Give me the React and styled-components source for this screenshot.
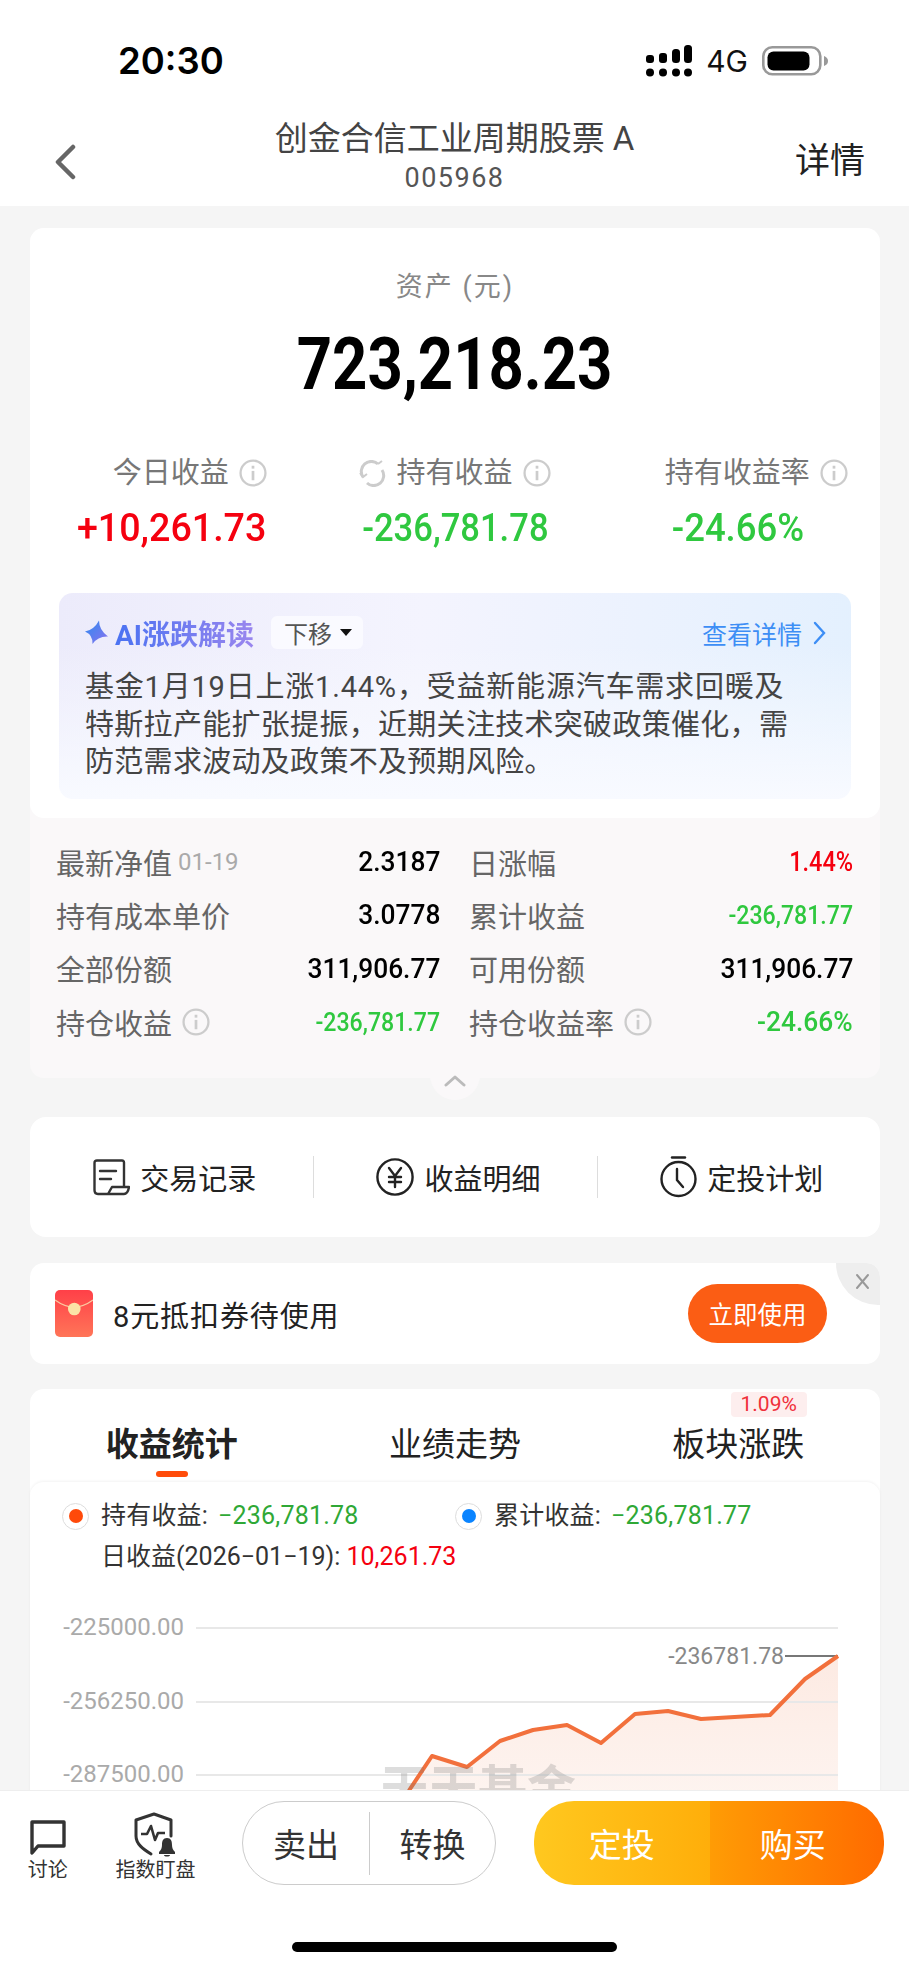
import React from 'react';
import styled, { createGlobalStyle } from 'styled-components';

const FONT = 'Roboto, "Noto Sans CJK SC", sans-serif';
const GREEN = '#2fc83f';
const RED = '#f5000f';

const GlobalStyle = createGlobalStyle`
  html, body { margin: 0; padding: 0; background: #fff; }
  body { font-family: ${FONT}; }
  * { box-sizing: border-box; }
`;

const Page = styled.div`
  width: 909px;
  height: 1969px;
  display: flex;
  flex-direction: column;
  overflow: hidden;
  background: #fff;
`;

/* the app's numerals are a DIN-like narrow face, so squeeze Roboto to fit */
const Num = styled.span`
  display: inline-block;
  white-space: nowrap;
  transform: scaleX(${(p) => p.$scale || 1});
  transform-origin: ${(p) => p.$origin || 'center'};
`;

/* status bar */
const StatusBar = styled.div`
  height: 90px;
  flex: none;
  display: flex;
  align-items: center;
  justify-content: space-between;
  padding: 32px 80px 0 118px;
`;
const Time = styled.div`
  font-family: Inter, sans-serif;
  font-weight: 600;
  font-size: 36.5px;
  line-height: 44px;
  color: #000;
`;
const StatusRight = styled.div`
  display: flex;
  align-items: center;
`;
const Network = styled.span`
  font-family: Inter, sans-serif;
  font-size: 30px;
  line-height: 32px;
  margin: 0 14px 0 14px;
  color: #111;
`;

/* nav */
const Nav = styled.div`
  height: 116px;
  flex: none;
  display: flex;
  align-items: center;
  justify-content: space-between;
  padding: 0 44px 0 54px;
  position: relative;
`;
const NavCenter = styled.div`
  position: absolute;
  left: 0;
  right: 0;
  top: 27px;
  text-align: center;
`;
const NavTitle = styled.div`
  font-size: 33px;
  line-height: 44px;
  color: #444;
`;
const NavCode = styled.div`
  font-size: 27px;
  line-height: 34px;
  color: #555;
  letter-spacing: 1.5px;
`;
const NavAction = styled.div`
  font-size: 35px;
  line-height: 44px;
  color: #222;
  margin-top: 28px;
`;
const BackIcon = styled.svg`
  margin-top: 28px;
`;

const Content = styled.div`
  flex: 1;
  min-height: 0;
  overflow: hidden;
  background: #f5f5f5;
  padding: 22px 29px 0 30px;
  border-bottom: 1px solid #eee;
`;

/* asset card */
const AssetCard = styled.div`
  position: relative;
  border-radius: 14px;
  background: #faf8f9;
`;
const AssetTop = styled.div`
  background: #fff;
  border-radius: 14px;
  padding: 42px 0 19px;
  text-align: center;
`;
const AssetLabel = styled.div`
  font-size: 27px;
  line-height: 34px;
  letter-spacing: 2px;
  color: #888;
`;
const AssetValue = styled.div`
  font-weight: 700;
  font-size: 72px;
  line-height: 80px;
  margin-top: 21px;
  color: #000;
`;
const Stats = styled.div`
  display: grid;
  grid-template-columns: repeat(3, 1fr);
  margin-top: 48px;
`;
const StatLabelRow = styled.div`
  display: flex;
  align-items: center;
  justify-content: center;
  gap: 10px;
  padding-left: ${(p) => (p.$indent ? 36 : 0)}px;
  font-size: 29px;
  line-height: 40px;
  color: #777;
`;
const StatValue = styled.div`
  font-weight: 500;
  font-size: 38px;
  line-height: 50px;
  margin-top: 10px;
  color: ${(p) => p.$color};
`;

/* AI box */
const AiBox = styled.div`
  margin: 40px 29px 0;
  height: 206px;
  border-radius: 14px;
  padding: 23px 26px 0;
  text-align: left;
  background:
    linear-gradient(180deg, rgba(255, 255, 255, 0) 25%, #f8faff 100%),
    linear-gradient(95deg, #ecebfb 0%, #f4f4fe 45%, #e3f0fe 100%);
`;
const AiHead = styled.div`
  display: flex;
  align-items: center;
  height: 33px;
`;
const AiTitle = styled.span`
  font-weight: 700;
  font-size: 28px;
  margin-left: 6px;
  background: linear-gradient(90deg, #4a72f2, #9a86ee);
  -webkit-background-clip: text;
  background-clip: text;
  color: transparent;
`;
const AiTag = styled.span`
  display: flex;
  align-items: center;
  gap: 8px;
  height: 33px;
  width: 92px;
  margin-left: 17px;
  padding-left: 13px;
  background: #fafaff;
  border-radius: 6px;
  font-size: 24px;
  color: #555;
`;
const Caret = styled.i`
  width: 0;
  height: 0;
  border-left: 6px solid transparent;
  border-right: 6px solid transparent;
  border-top: 7px solid #111;
`;
const AiMore = styled.span`
  margin-left: auto;
  margin-right: -1px;
  display: flex;
  align-items: center;
  gap: 11px;
  font-size: 25px;
  color: #3d8ef5;
`;
const AiBody = styled.div`
  margin-top: 20px;
  font-size: 29px;
  line-height: 37.5px;
  color: #444;
  white-space: nowrap;
`;
const AiLine = styled.div`
  letter-spacing: ${(p) => p.$spacing}px;
`;

/* detail rows */
const Details = styled.div`
  display: grid;
  grid-template-columns: 384px 384px;
  grid-auto-rows: 53.3px;
  column-gap: 29px;
  padding: 17px 28px 30px 26px;
`;
const DetailRow = styled.div`
  display: flex;
  align-items: center;
  justify-content: space-between;
`;
const DetailLabel = styled.div`
  display: flex;
  align-items: center;
  gap: 10px;
  font-size: 29px;
  color: #666;
`;
const DetailDate = styled.span`
  font-size: 24px;
  color: #aaa;
  margin-left: -4px;
`;
const DetailValue = styled.div`
  font-weight: 500;
  font-size: ${(p) => p.$size || 28}px;
  color: ${(p) => p.$color || '#000'};
`;
const Toggle = styled.div`
  position: absolute;
  left: 400px;
  bottom: -22px;
  width: 50px;
  height: 44px;
  border-radius: 0 0 25px 25px;
  background: #faf8f9;
  display: flex;
  justify-content: center;
  padding-top: 18px;
`;

/* actions */
const ActionCard = styled.div`
  margin-top: 39px;
  height: 120px;
  background: #fff;
  border-radius: 16px;
  display: grid;
  grid-template-columns: repeat(3, 1fr);
  align-items: center;
`;
const ActionItem = styled.div`
  display: flex;
  align-items: center;
  justify-content: center;
  gap: 10px;
  height: 42px;
  padding-left: 6px;
  font-size: 29px;
  color: #222;
  border-left: ${(p) => (p.$divided ? '1.5px solid #ddd' : 'none')};
`;

/* coupon */
const CouponCard = styled.div`
  position: relative;
  overflow: hidden;
  margin-top: 26px;
  height: 101px;
  background: #fff;
  border-radius: 14px;
  display: flex;
  align-items: center;
  padding: 0 53px 0 25px;
`;
const CouponText = styled.div`
  flex: 1;
  margin-left: 20px;
  font-size: 29px;
  letter-spacing: 0.9px;
  color: #222;
`;
const CouponButton = styled.div`
  width: 139px;
  height: 59px;
  border-radius: 30px;
  background: #fb5d14;
  color: #fff;
  font-size: 24.5px;
  display: flex;
  align-items: center;
  justify-content: center;
`;
const CouponClose = styled.div`
  position: absolute;
  top: 0;
  right: 0;
  width: 44px;
  height: 42px;
  background: #eeeeee;
  border-bottom-left-radius: 44px;
  display: flex;
  justify-content: center;
  padding: 10px 0 0 8px;
`;

/* tabs */
const TabCard = styled.div`
  margin-top: 25px;
  background: #fff;
  border-radius: 14px 14px 0 0;
`;
const TabRow = styled.div`
  height: 93px;
  display: grid;
  grid-template-columns: repeat(3, 1fr);
  padding-top: 36px;
`;
const Tab = styled.div`
  position: relative;
  display: flex;
  flex-direction: column;
  align-items: center;
  font-size: 33px;
  line-height: 40px;
  color: #222;
  font-weight: ${(p) => (p.$active ? 700 : 400)};
`;
const TabMark = styled.i`
  display: block;
  width: 32px;
  height: 6px;
  margin-top: 6px;
  border-radius: 3px;
  background: #ff4c0a;
`;
const TabBadge = styled.span`
  position: absolute;
  top: -33px;
  left: 134px;
  width: 76px;
  height: 25px;
  border-radius: 4px;
  background: #fdeeee;
  color: #f0303a;
  font-size: 21px;
  font-weight: 400;
  line-height: 25px;
  text-align: center;
`;

/* chart card */
const ChartCard = styled.div`
  background: #fff;
  border-radius: 14px 14px 0 0;
  box-shadow: 0 -1px 3px rgba(0, 0, 0, 0.05);
  padding-top: 17px;
`;
const Legend = styled.div`
  display: grid;
  grid-template-columns: 393px 1fr;
  padding-left: 32px;
  font-size: 25px;
  line-height: 34px;
  letter-spacing: 0.2px;
  color: #333;
`;
const LegendItem = styled.div`
  display: flex;
  align-items: center;
  gap: 12px;
`;
const Radio = styled.span`
  width: 27px;
  height: 27px;
  border-radius: 50%;
  border: 1.5px solid #ddd;
  display: flex;
  align-items: center;
  justify-content: center;
  &::after {
    content: '';
    width: 14px;
    height: 14px;
    border-radius: 50%;
    background: ${(p) => p.$color};
  }
`;
const Money = styled.span`
  color: ${(p) => p.$color};
  margin-left: ${(p) => p.$gap || 0}px;
`;
const DailyLine = styled.div`
  margin: 7px 0 0 71px;
  font-size: 25px;
  line-height: 34px;
  color: #333;
`;
const ChartWrap = styled.div`
  position: relative;
  margin-top: 26px;
  height: 260px;
`;
const ChartSvg = styled.svg`
  display: block;
`;
const AxisLabel = styled.text`
  font-family: ${FONT};
  font-size: ${(p) => p.$size || 24}px;
  fill: ${(p) => p.$fill || '#aaa'};
`;
const Watermark = styled.div`
  position: absolute;
  left: 350px;
  top: 165px;
  font-weight: 700;
  font-size: 49px;
  line-height: 50px;
  color: rgba(120, 120, 120, 0.25);
`;

/* bottom bar */
const BottomBar = styled.div`
  height: 178px;
  flex: none;
  background: #fff;
  position: relative;
`;
const BarRow = styled.div`
  display: flex;
  align-items: flex-start;
  padding: 10px 25px 0 0;
`;
const BarTool = styled.div`
  width: ${(p) => p.$width}px;
  margin-left: ${(p) => p.$left}px;
  display: flex;
  flex-direction: column;
  align-items: center;
  font-size: 20px;
  line-height: 26px;
  color: #333;
`;
const ToolIcon = styled.div`
  height: 56px;
  display: flex;
  align-items: flex-end;
`;
const SellGroup = styled.div`
  margin-left: 42px;
  width: 255px;
  height: 84px;
  border: 1.5px solid #ccc;
  border-radius: 42px;
  display: grid;
  grid-template-columns: 1fr 1fr;
  align-items: center;
  font-size: 33px;
  color: #333;
`;
const SellItem = styled.div`
  height: 63px;
  display: flex;
  align-items: center;
  justify-content: center;
  border-left: ${(p) => (p.$divided ? '1.5px solid #ccc' : 'none')};
`;
const BuyGroup = styled.div`
  margin-left: 38px;
  width: 352px;
  height: 84px;
  border-radius: 40px;
  overflow: hidden;
  display: grid;
  grid-template-columns: 176px 176px;
  color: #fff;
  font-size: 33px;
`;
const BuyItem = styled.div`
  display: flex;
  align-items: center;
  justify-content: center;
  padding-right: ${(p) => p.$shift || 0}px;
  background: ${(p) => p.$bg};
`;
const HomeIndicator = styled.div`
  position: absolute;
  left: 292px;
  top: 151px;
  width: 325px;
  height: 10px;
  border-radius: 5px;
  background: #000;
`;

const InfoIcon = ({ size = 28 }) => (
  <svg width={size} height={size} viewBox="0 0 27 27" fill="none">
    <circle cx="13.5" cy="13.5" r="12" stroke="#ccc" strokeWidth="2.2" />
    <rect x="12.2" y="11.5" width="2.6" height="9" fill="#ccc" />
    <rect x="12.2" y="6.5" width="2.6" height="2.8" fill="#ccc" />
  </svg>
);

const Signal = () => (
  <svg width="46" height="32" viewBox="0 0 46 32" fill="#000">
    <rect x="0" y="10" width="8" height="8" rx="3" />
    <rect x="13" y="8" width="8" height="10" rx="3" />
    <rect x="26" y="4" width="8" height="14" rx="3.5" />
    <rect x="38" y="0" width="8" height="18" rx="3.5" />
    <circle cx="4" cy="27.5" r="4" />
    <circle cx="17" cy="27.5" r="4" />
    <circle cx="30" cy="27.5" r="4" />
    <circle cx="42" cy="27.5" r="4" />
  </svg>
);

const Battery = () => (
  <svg width="67" height="30" viewBox="0 0 67 30">
    <rect x="1.3" y="1.3" width="57" height="27" rx="9" fill="none" stroke="#999" strokeWidth="2.6" />
    <rect x="5.5" y="5.5" width="42" height="19" rx="6" fill="#000" />
    <path d="M62 10 C65 11 66 13 66 15 C66 17 65 19 62 20 Z" fill="#999" />
  </svg>
);

const RefreshIcon = () => (
  <svg width="27" height="27" viewBox="0 0 27 27" fill="none" stroke="#ccc" strokeWidth="3">
    <path d="M4 17 A10 10 0 0 1 19 4" />
    <path d="M23 10 A10 10 0 0 1 8 23" />
    <path d="M19 4 L23 1 M1 13 L4 17 L8 14" strokeWidth="2" />
  </svg>
);

const Star = () => (
  <svg width="24" height="25" viewBox="0 0 24 25">
    <defs>
      <linearGradient id="star" x1="0" y1="0" x2="1" y2="1">
        <stop offset="0" stopColor="#2f8cf0" />
        <stop offset="1" stopColor="#8a70ee" />
      </linearGradient>
    </defs>
    <path d="M0 11.5 Q9 10 14 0.5 Q14 10 23 16.5 Q13 16 7.5 24 Q8 15 0 11.5 Z" fill="url(#star)" />
  </svg>
);

const RecordIcon = () => (
  <svg width="37" height="37" viewBox="0 0 37 37" fill="none" stroke="#333" strokeWidth="2.4" strokeLinecap="round" strokeLinejoin="round">
    <path d="M31 27 V3.5 Q31 1.5 29 1.5 H4 Q1.5 1.5 1.5 4 V31 Q1.5 35 5 35 H31 Q35 35 36 28 H19 L15 35" />
    <path d="M7 12 H23 M7 20 H18" />
  </svg>
);

const YuanIcon = () => (
  <svg width="38" height="38" viewBox="0 0 38 38" fill="none" stroke="#222" strokeWidth="2.4" strokeLinecap="round">
    <circle cx="19" cy="19" r="17.6" />
    <path d="M13 10 L19 18 L25 10 M19 18 V29 M13 19 H25 M13 24 H25" />
  </svg>
);

const TimerIcon = () => (
  <svg width="37" height="42" viewBox="0 0 37 42" fill="none" stroke="#222" strokeWidth="2.4" strokeLinecap="round">
    <path d="M12 1.5 H25" />
    <circle cx="18.5" cy="23" r="17" />
    <path d="M17 13 V24 L23 31" />
  </svg>
);

const RedPacket = () => (
  <svg width="38" height="47" viewBox="0 0 38 47">
    <defs>
      <linearGradient id="packet" x1="0" y1="0" x2="0" y2="1">
        <stop offset="0" stopColor="#ff4048" />
        <stop offset="1" stopColor="#ff7558" />
      </linearGradient>
    </defs>
    <rect width="38" height="47" rx="5" fill="url(#packet)" />
    <path d="M0 10 Q19 24 38 10" fill="none" stroke="#fbc9a0" strokeWidth="1.2" />
    <circle cx="19.3" cy="19" r="6.3" fill="#fbe3a6" />
  </svg>
);

const BubbleIcon = () => (
  <svg width="38" height="38" viewBox="0 0 38 38" fill="none" stroke="#333" strokeWidth="3.4" strokeLinejoin="round">
    <path d="M3 34 V3 H35 V27 H9 Z" />
  </svg>
);

const ShieldIcon = () => (
  <svg width="42" height="45" viewBox="0 0 42 45" fill="none">
    <path d="M20 2 L2 8 V24 C2 32 9 37 17 42 M20 2 L37 8 V24" stroke="#333" strokeWidth="3" strokeLinecap="round" strokeLinejoin="round" />
    <path d="M7 22 H13 L17 14 L21 28 L24 21 H31" stroke="#333" strokeWidth="2.6" strokeLinejoin="round" />
    <path d="M33 26 C37 26 38 29 38 33 C38 36 39 38 41 40 V42 H25 V40 C27 38 28 36 28 33 C28 29 29 26 33 26 Z M30 43 H36 C36 45 30 45 30 43 Z" fill="#333" />
  </svg>
);

const chartPoints = [
  [808, 56], [775, 79], [740, 115], [671, 119], [638, 111], [605, 114], [571, 143],
  [537, 125], [503, 130], [470, 141], [437, 167], [402, 156], [380, 189], [360, 225],
];
const linePath = chartPoints.map((p) => p.join(',')).join(' ');
const areaPath = `${linePath} 360,260 808,260`;

const details = [
  { label: '最新净值', date: '01-19', value: '2.3187', scale: 0.94 },
  { label: '日涨幅', value: '1.44%', color: RED, scale: 0.84 },
  { label: '持有成本单价', value: '3.0778', scale: 0.94 },
  { label: '累计收益', value: '-236,781.77', color: GREEN, size: 26, scale: 0.89 },
  { label: '全部份额', value: '311,906.77', scale: 0.94 },
  { label: '可用份额', value: '311,906.77', scale: 0.94 },
  { label: '持仓收益', info: true, value: '-236,781.77', color: GREEN, size: 26, scale: 0.89 },
  { label: '持仓收益率', info: true, value: '-24.66%', color: GREEN, scale: 0.94 },
];

export default function App() {
  return (
    <Page>
      <GlobalStyle />
      <StatusBar>
        <Time>20:30</Time>
        <StatusRight>
          <Signal />
          <Network>4G</Network>
          <Battery />
        </StatusRight>
      </StatusBar>

      <Nav>
        <BackIcon width="22" height="36" viewBox="0 0 22 36" fill="none" stroke="#666" strokeWidth="4.5" strokeLinecap="round" strokeLinejoin="round">
          <path d="M19 3 L4 18 L19 33" />
        </BackIcon>
        <NavCenter>
          <NavTitle>创金合信工业周期股票 A</NavTitle>
          <NavCode>005968</NavCode>
        </NavCenter>
        <NavAction>详情</NavAction>
      </Nav>

      <Content>
        <AssetCard>
          <AssetTop>
            <AssetLabel>资产 (元)</AssetLabel>
            <AssetValue><Num $scale={0.855}>723,218.23</Num></AssetValue>
            <Stats>
              <div>
                <StatLabelRow $indent>今日收益<InfoIcon /></StatLabelRow>
                <StatValue $color={RED}><Num $scale={0.99}>+10,261.73</Num></StatValue>
              </div>
              <div>
                <StatLabelRow><RefreshIcon />持有收益<InfoIcon /></StatLabelRow>
                <StatValue $color={GREEN}><Num $scale={0.91}>-236,781.78</Num></StatValue>
              </div>
              <div>
                <StatLabelRow $indent>持有收益率<InfoIcon /></StatLabelRow>
                <StatValue $color={GREEN}><Num $scale={0.96}>-24.66%</Num></StatValue>
              </div>
            </Stats>
            <AiBox>
              <AiHead>
                <Star />
                <AiTitle>AI涨跌解读</AiTitle>
                <AiTag>下移<Caret /></AiTag>
                <AiMore>
                  查看详情
                  <svg width="13" height="24" viewBox="0 0 13 24" fill="none" stroke="#3d8ef5" strokeWidth="2.4" strokeLinecap="round">
                    <path d="M2 2 L11 12 L2 22" />
                  </svg>
                </AiMore>
              </AiHead>
              <AiBody>
                <AiLine $spacing={0.8}>基金1月19日上涨1.44%，受益新能源汽车需求回暖及</AiLine>
                <AiLine $spacing={0.3}>特斯拉产能扩张提振，近期关注技术突破政策催化，需</AiLine>
                <AiLine $spacing={0.3}>防范需求波动及政策不及预期风险。</AiLine>
              </AiBody>
            </AiBox>
          </AssetTop>
          <Details>
            {details.map((d) => (
              <DetailRow key={d.label}>
                <DetailLabel>
                  {d.label}
                  {d.date && <DetailDate>{d.date}</DetailDate>}
                  {d.info && <InfoIcon />}
                </DetailLabel>
                <DetailValue $color={d.color} $size={d.size}>
                  <Num $scale={d.scale} $origin="right">{d.value}</Num>
                </DetailValue>
              </DetailRow>
            ))}
          </Details>
          <Toggle>
            <svg width="22" height="13" viewBox="0 0 22 13" fill="none" stroke="#bbb" strokeWidth="3" strokeLinecap="round" strokeLinejoin="round">
              <path d="M2 11 L11 3 L20 11" />
            </svg>
          </Toggle>
        </AssetCard>

        <ActionCard>
          <ActionItem><RecordIcon />交易记录</ActionItem>
          <ActionItem $divided><YuanIcon />收益明细</ActionItem>
          <ActionItem $divided><TimerIcon />定投计划</ActionItem>
        </ActionCard>

        <CouponCard>
          <RedPacket />
          <CouponText>8元抵扣券待使用</CouponText>
          <CouponButton>立即使用</CouponButton>
          <CouponClose>
            <svg width="15" height="17" viewBox="0 0 15 17" stroke="#999" strokeWidth="2" strokeLinecap="round">
              <path d="M2 2 L13 15 M13 2 L2 15" />
            </svg>
          </CouponClose>
        </CouponCard>

        <TabCard>
          <TabRow>
            <Tab $active>收益统计<TabMark /></Tab>
            <Tab>业绩走势</Tab>
            <Tab>板块涨跌<TabBadge>1.09%</TabBadge></Tab>
          </TabRow>
          <ChartCard>
            <Legend>
              <LegendItem>
                <Radio $color="#ff4a0a" />
                <span>持有收益:<Money $color="#2fa836" $gap={10}>−236,781.78</Money></span>
              </LegendItem>
              <LegendItem>
                <Radio $color="#0a84ff" />
                <span>累计收益:<Money $color="#2fa836" $gap={10}>−236,781.77</Money></span>
              </LegendItem>
            </Legend>
            <DailyLine>日收益(2026−01−19): <Money $color={RED}>10,261.73</Money></DailyLine>
            <ChartWrap>
              <ChartSvg width="850" height="260" viewBox="0 0 850 260">
                <defs>
                  <linearGradient id="area" x1="0" y1="0" x2="0" y2="1">
                    <stop offset="0" stopColor="#fbdccf" />
                    <stop offset="1" stopColor="#fdf4f0" />
                  </linearGradient>
                </defs>
                <polygon points={areaPath} fill="url(#area)" opacity="0.6" />
                {[28, 102, 175].map((y) => (
                  <line key={y} x1="166" x2="808" y1={y} y2={y} stroke="#e8e8e8" strokeWidth="2" />
                ))}
                <AxisLabel x="154" y="35" textAnchor="end">-225000.00</AxisLabel>
                <AxisLabel x="154" y="109" textAnchor="end">-256250.00</AxisLabel>
                <AxisLabel x="154" y="182" textAnchor="end">-287500.00</AxisLabel>
                <AxisLabel x="754" y="64" textAnchor="end" $size={23} $fill="#888">-236781.78</AxisLabel>
                <line x1="755" x2="808" y1="56" y2="56" stroke="#777" strokeWidth="2" />
                <polyline points={linePath} fill="none" stroke="#f2703c" strokeWidth="4" strokeLinejoin="round" />
              </ChartSvg>
              <Watermark>天天基金</Watermark>
            </ChartWrap>
          </ChartCard>
        </TabCard>
      </Content>

      <BottomBar>
        <BarRow>
          <BarTool $width={60} $left={18}>
            <ToolIcon><BubbleIcon /></ToolIcon>
            <span>讨论</span>
          </BarTool>
          <BarTool $width={90} $left={33}>
            <ToolIcon><ShieldIcon /></ToolIcon>
            <span>指数盯盘</span>
          </BarTool>
          <SellGroup>
            <SellItem>卖出</SellItem>
            <SellItem $divided>转换</SellItem>
          </SellGroup>
          <BuyGroup>
            <BuyItem $bg="linear-gradient(90deg, #ffc81f, #ffae0a)">定投</BuyItem>
            <BuyItem $bg="linear-gradient(90deg, #ff9c05, #ff6a00)" $shift={10}>购买</BuyItem>
          </BuyGroup>
        </BarRow>
        <HomeIndicator />
      </BottomBar>
    </Page>
  );
}
